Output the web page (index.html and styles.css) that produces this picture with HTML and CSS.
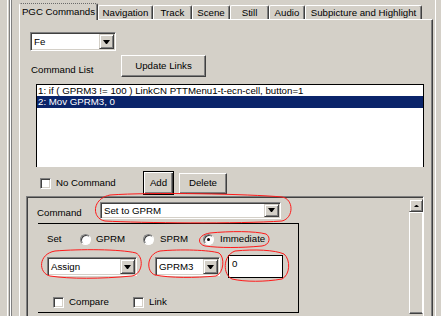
FILE: index.html
```html
<!DOCTYPE html>
<html>
<head>
<meta charset="utf-8">
<link rel="stylesheet" href="styles.css">
</head>
<body>
<div class="window">
  <div class="splitter"><span class="grip g1"></span><span class="grip g2"></span></div>
  <div class="tabctl">
    <div class="tabs">
      <div class="tab sel w-pgc">PGC Commands</div>
      <div class="tab w-nav">Navigation</div>
      <div class="tab w-track">Track</div>
      <div class="tab w-scene">Scene</div>
      <div class="tab w-still">Still</div>
      <div class="tab w-audio">Audio</div>
      <div class="tab w-sub">Subpicture and Highlight</div>
    </div>
    <div class="panel">
      <div class="combo fe"><span class="val">Fe</span><span class="dbtn"><i class="arrow"></i></span></div>
      <div class="row2">
        <span class="lbl-cmdlist">Command List</span>
        <div class="button update">Update Links</div>
      </div>
      <div class="listbox">
        <div class="item">1: if ( GPRM3 != 100 ) LinkCN PTTMenu1-t-ecn-cell, button=1</div>
        <div class="item selected">2: Mov GPRM3, 0</div>
      </div>
      <div class="row3">
        <span class="check nocmd"></span><span class="nocmd-text">No Command</span>
        <div class="button default add">Add</div>
        <div class="button del">Delete</div>
      </div>
      <div class="frame">
        <div class="frame-inner">
          <div class="frame-main">
            <div class="cmdrow">
              <span class="lbl-cmd">Command</span>
              <div class="combo setto"><span class="val">Set to GPRM</span><span class="dbtn"><i class="arrow"></i></span></div>
            </div>
            <div class="box">
              <div class="radiorow">
                <span class="lbl-set">Set</span>
                <span class="ritem r1"><span class="radio"></span>GPRM</span>
                <span class="ritem r2"><span class="radio"></span>SPRM</span>
                <span class="ritem r3"><span class="radio checked"></span>Immediate</span>
              </div>
              <div class="comborow">
                <div class="combo assign"><span class="val">Assign</span><span class="dbtn"><i class="arrow"></i></span></div>
                <div class="combo gprm"><span class="val">GPRM3</span><span class="dbtn"><i class="arrow"></i></span></div>
                <div class="edit">0</div>
              </div>
              <div class="checkrow">
                <span class="citem c1"><span class="check"></span>Compare</span>
                <span class="citem"><span class="check"></span>Link</span>
              </div>
            </div>
          </div>
          <div class="scrollbar">
            <div class="sbtn"><i class="uparrow"></i></div>
            <div class="thumb"></div>
          </div>
        </div>
      </div>
    </div>
  </div>
  <div class="rightstrip"><span class="rline"></span></div>
  <svg class="marks" width="441" height="316" viewBox="0 0 441 316">
    <g fill="none" stroke="#ff1a1a" stroke-width="1">
      <path d="M110 195 C150 192 250 194 282 197 C294 199 294 218 282 221 C240 224 140 223 105 221 C92 219 91 199 110 195 Z"/>
      <path d="M210 233 C230 231 255 231 266 234 C271 237 270 245 262 246 C240 248 220 248 205 246 C197 244 197 235 210 233 Z"/>
      <path d="M55 251 C80 249 120 249 136 253 C144 257 143 274 132 276 C100 279 70 279 50 276 C38 273 38 254 55 251 Z"/>
      <path d="M160 251 C180 249 210 250 219 253 C225 257 224 273 216 276 C195 278 170 278 155 275 C146 272 146 254 160 251 Z"/>
      <path d="M235 251 C255 249 275 250 284 254 C291 260 290 275 282 279 C265 282 245 282 232 279 C223 275 222 256 235 251 Z"/>
    </g>
  </svg>
</div>
</body>
</html>
```
FILE: styles.css
```css
html, body { margin: 0; padding: 0; background: #d4d0c8; }
.window {
  position: relative;
  display: flex;
  width: 441px;
  height: 316px;
  overflow: hidden;
  background: #d4d0c8;
  font-family: "Liberation Sans", Arial, sans-serif;
  font-size: 9.7px;
  line-height: 12px;
  color: #000;
}
.splitter { width: 19px; flex: none; display: flex; }
.grip { display: block; width: 1px; border-left: 1px solid #fff; border-right: 1px solid #808080; }
.g1 { margin-left: 7px; }
.g2 { margin-left: 0; width: 0; }

.tabctl { width: 414px; flex: none; display: flex; flex-direction: column; }
.tabs { height: 19px; display: flex; align-items: flex-end; position: relative; z-index: 2; }
.tab {
  box-sizing: border-box;
  height: 14px;
  border-top: 1px solid #fff;
  border-left: 1px solid #fff;
  border-right: 1px solid #404040;
  box-shadow: inset -1px 0 #808080;
  border-radius: 2px 2px 0 0;
  text-align: center;
  line-height: 13px;
  white-space: nowrap;
}
.tab.sel {
  height: 17px;
  margin-bottom: -1px;
  background: #d4d0c8;
  line-height: 13px;
  padding-top: 1px;
  border-top: 1px dotted #6a6a6a;
}
.w-pgc { width: 79px; }
.w-nav { width: 55px; }
.w-track { width: 39px; }
.w-scene { width: 38px; }
.w-still { width: 39px; }
.w-audio { width: 36px; }
.w-sub { width: 117px; }

.panel {
  flex: 1;
  border-top: 1px solid #fff;
  border-left: 1px solid #fff;
  border-right: 1px solid #404040;
  box-shadow: inset -1px 0 #808080;
  display: flex;
  flex-direction: column;
  overflow: hidden;
}

/* combo box */
.combo {
  box-sizing: border-box;
  display: flex;
  height: 19px;
  padding: 1px;
  border: 1px solid;
  border-color: #808080 #fff #fff #808080;
  box-shadow: inset 1px 1px #404040, inset -1px -1px #d4d0c8;
  background: #fff;
}
.combo .val { flex: 1; padding-left: 2px; line-height: 15px; white-space: nowrap; overflow: hidden; }
.combo .dbtn {
  box-sizing: border-box;
  width: 15px;
  background: #d4d0c8;
  border: 1px solid;
  border-color: #d4d0c8 #404040 #404040 #d4d0c8;
  box-shadow: inset 1px 1px #fff, inset -1px -1px #808080;
  display: flex;
  align-items: center;
  justify-content: center;
}
.arrow { display: block; width: 1px; height: 0; border-left: 3px solid transparent; border-right: 3px solid transparent; border-top: 4px solid #000; }
.fe { width: 86px; margin: 12px 0 0 10px; }

/* buttons */
.button {
  box-sizing: border-box;
  background: #d4d0c8;
  border: 1px solid;
  border-color: #fff #404040 #404040 #fff;
  box-shadow: inset -1px -1px #808080;
  display: flex;
  align-items: center;
  justify-content: center;
  white-space: nowrap;
}
.button.default {
  border: 1px solid #000;
  box-shadow: inset 1px 1px #fff, inset -1px -1px #404040, inset -2px -2px #808080;
}

.row2 { display: flex; align-items: flex-end; margin-top: 4px; }
.lbl-cmdlist { width: 90px; margin-left: 11px; padding-bottom: 1px; }
.update { width: 85px; height: 22px; }

.listbox {
  box-sizing: border-box;
  width: 388px;
  height: 83px;
  margin: 7px 0 0 16px;
  background: #fff;
  border: 1px solid #000;
  border-bottom: none;
  overflow: hidden;
}
.item { height: 11px; line-height: 11px; padding-left: 1px; white-space: nowrap; overflow: hidden; }
.item.selected { height: 12px; line-height: 12px; background: #0a246a; color: #fff; }

.row3 { display: flex; align-items: center; margin-top: 4px; height: 24px; }
.check {
  box-sizing: border-box;
  display: inline-block;
  width: 11px;
  height: 11px;
  background: #fff;
  border: 1px solid;
  border-color: #808080 #fff #fff #808080;
  box-shadow: inset 1px 1px #404040, inset -1px -1px #d4d0c8;
  flex: none;
}
.nocmd { margin-left: 20px; }
.nocmd-text { margin-left: 5px; width: 87px; }
.add { width: 31px; height: 24px; }
.del { width: 48px; height: 21px; margin-left: 5px; }

.frame {
  flex: 1;
  margin: 1px 0 0 6px;
  width: 398px;
  box-sizing: border-box;
  border-top: 1px solid #808080;
  border-left: 1px solid #808080;
  border-right: 1px solid #fff;
  display: flex;
}
.frame-inner {
  flex: 1;
  display: flex;
  border-top: 1px solid #404040;
  border-left: 1px solid #404040;
}
.frame-main { flex: 1; display: flex; flex-direction: column; }
.cmdrow { display: flex; align-items: center; margin-top: 3px; padding-left: 9px; }
.lbl-cmd { width: 63px; padding-top: 6px; }
.setto { width: 181px; height: 17px; }
.setto .val { line-height: 13px; }

.box {
  box-sizing: border-box;
  width: 261px;
  height: 90px;
  margin: 4px 0 0 10px;
  border-top: 1px solid #000;
  border-right: 1px solid #000;
  border-bottom: 1px solid #000;
  display: flex;
  flex-direction: column;
}
.radiorow { display: flex; align-items: center; height: 12px; margin-top: 9px; padding-left: 9px; }
.lbl-set { width: 33px; }
.ritem { display: flex; align-items: center; }
.r1 { width: 63px; }
.r2 { width: 60px; }
.radio {
  box-sizing: border-box;
  width: 11px;
  height: 11px;
  margin-right: 5px;
  border-radius: 50%;
  background: #fff;
  border: 1px solid;
  border-color: #808080 #fff #fff #808080;
  box-shadow: inset 1px 1px #404040;
  display: flex;
  align-items: center;
  justify-content: center;
}
.r2 .radio { margin-right: 6px; }
.r3 .radio { margin-right: 6px; }
.radio.checked::after { content: ""; width: 3px; height: 3px; border-radius: 50%; background: #000; }

.comborow { display: flex; align-items: center; height: 23px; margin-top: 10px; padding-left: 9px; }
.assign { width: 90px; }
.gprm { width: 65px; margin-left: 18px; }
.edit {
  box-sizing: border-box;
  width: 55px;
  height: 23px;
  margin-left: 8px;
  border: 1px solid #000;
  background: #fff;
  padding: 2px 0 0 3px;
}

.checkrow { display: flex; align-items: center; height: 12px; margin-top: 18px; padding-left: 15px; }
.citem { display: flex; align-items: center; }
.citem .check { margin-right: 5px; }
.c1 { width: 80px; }

.scrollbar { width: 14px; flex: none; margin-top: 1px; display: flex; flex-direction: column; }
.sbtn {
  box-sizing: border-box;
  height: 13px;
  border: 1px solid;
  border-color: #d4d0c8 #404040 #404040 #d4d0c8;
  box-shadow: inset 1px 1px #fff, inset -1px -1px #808080;
  display: flex;
  align-items: center;
  justify-content: center;
}
.uparrow { display: block; width: 1px; height: 0; border-left: 2px solid transparent; border-right: 2px solid transparent; border-bottom: 2px solid #000; }
.thumb {
  box-sizing: border-box;
  height: 102px;
  border: 1px solid;
  border-color: #fff #fff #404040 #fff;
  box-shadow: inset 0 -1px #808080;
}

.rightstrip { width: 8px; flex: none; display: flex; }
.rline { display: block; width: 0; margin-left: 2px; border-left: 1px solid #fff; }

.marks { position: absolute; left: 0; top: 0; pointer-events: none; }
```
